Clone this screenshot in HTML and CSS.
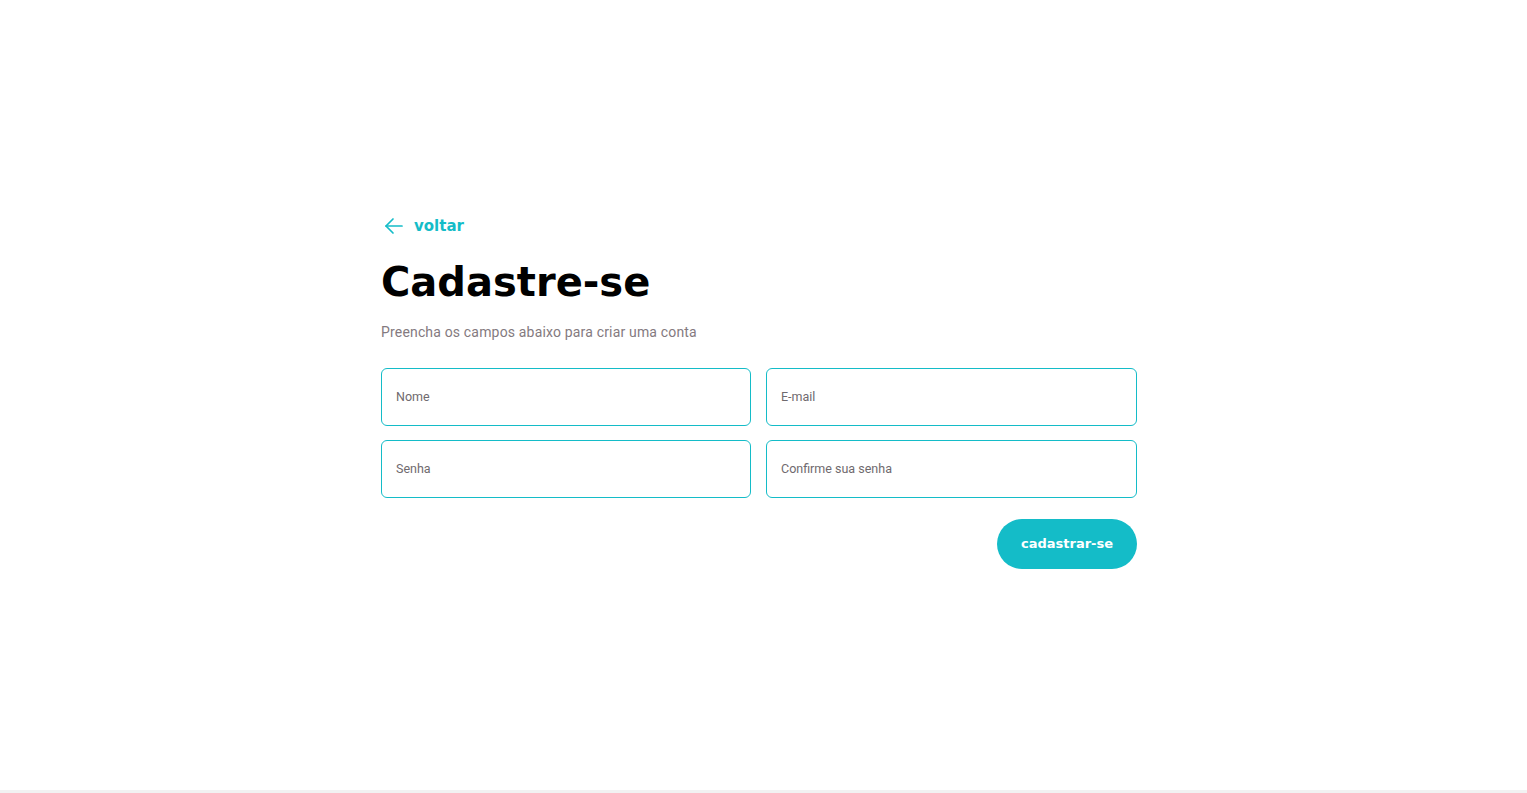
FILE: index.html
```html
<!DOCTYPE html>
<html lang="pt-BR">
<head>
<meta charset="utf-8">
<title>Cadastre-se</title>
<link rel="stylesheet" href="styles.css">
</head>
<body>
<main class="page">
  <section class="card">
    <a class="back" href="#">
      <svg class="back-icon" viewBox="0 0 24 24" width="24" height="24" fill="none" stroke="currentColor" stroke-width="1.7" stroke-linecap="round" stroke-linejoin="round"><line x1="20" y1="12" x2="4" y2="12"/><polyline points="11 19 4 12 11 5"/></svg>
      <span>voltar</span>
    </a>
    <h1 class="title">Cadastre-se</h1>
    <p class="subtitle">Preencha os campos abaixo para criar uma conta</p>
    <form class="form">
      <div class="grid">
        <input class="field" type="text" placeholder="Nome">
        <input class="field" type="email" placeholder="E-mail">
        <input class="field" type="password" placeholder="Senha">
        <input class="field" type="password" placeholder="Confirme sua senha">
      </div>
      <div class="actions">
        <button class="submit" type="button">cadastrar-se</button>
      </div>
    </form>
  </section>
</main>
<div class="footer-strip"></div>
</body>
</html>
```
FILE: styles.css
```css
html, body {
  margin: 0;
  padding: 0;
  height: 100%;
}
body {
  background: #ffffff;
  font-family: Roboto, "Liberation Sans", sans-serif;
  display: flex;
  flex-direction: column;
}
.page {
  flex: 1;
  display: flex;
  align-items: center;
  justify-content: center;
  padding-right: 9px;
}
.card {
  width: 756px;
  display: flex;
  flex-direction: column;
  margin-top: -6px;
}
.back {
  display: flex;
  align-items: center;
  gap: 8px;
  color: #14bcc8;
  text-decoration: none;
  font-family: "DejaVu Sans", sans-serif;
  font-weight: 700;
  font-size: 15px;
  height: 20px;
  margin-left: 1px;
}
.back-icon {
  display: block;
}
.title {
  margin: 21px 0 0;
  font-family: "DejaVu Sans", sans-serif;
  font-weight: 700;
  font-size: 40px;
  line-height: 50px;
  color: #000;
}
.subtitle {
  margin: 16px 0 0;
  font-size: 14px;
  line-height: 18px;
  letter-spacing: 0.17px;
  color: #847a80;
}
.form {
  margin-top: 27px;
}
.grid {
  display: grid;
  grid-template-columns: 370px 371px;
  column-gap: 15px;
  row-gap: 14px;
}
.field {
  box-sizing: border-box;
  height: 58px;
  border: 1px solid #14bcc8;
  border-radius: 6px;
  padding: 0 14px;
  font-family: Roboto, sans-serif;
  font-size: 12.5px;
  color: #333;
  outline: none;
  background: #fff;
}
.field::placeholder {
  color: #6f6a6e;
}
.actions {
  display: flex;
  justify-content: flex-end;
  margin-top: 21px;
}
.submit {
  width: 140px;
  height: 50px;
  border: none;
  border-radius: 25px;
  background: #14bcc8;
  color: #fff;
  font-family: "DejaVu Sans", sans-serif;
  font-weight: 700;
  font-size: 13px;
  cursor: pointer;
}
.footer-strip {
  height: 3px;
  background: #f2f2f2;
}
```
